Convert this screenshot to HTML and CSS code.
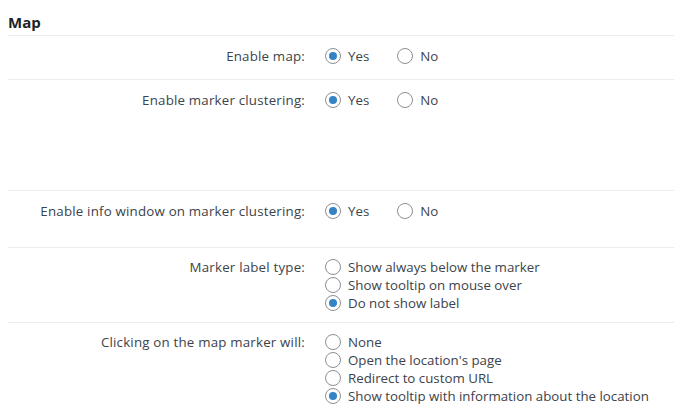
FILE: index.html
```html
<!DOCTYPE html>
<html>
<head>
<meta charset="utf-8">
<link rel="stylesheet" href="styles.css">
</head>
<body>
<div class="page">
  <h2 class="title">Map</h2>
  <div class="row r1">
    <div class="label">Enable map:</div>
    <div class="opts inline">
      <label class="opt"><span class="radio on"></span>Yes</label>
      <label class="opt"><span class="radio"></span>No</label>
    </div>
  </div>
  <div class="row r2">
    <div class="label">Enable marker clustering:</div>
    <div class="opts inline">
      <label class="opt"><span class="radio on"></span>Yes</label>
      <label class="opt"><span class="radio"></span>No</label>
    </div>
  </div>
  <div class="row r3">
    <div class="label">Enable info window on marker clustering:</div>
    <div class="opts inline">
      <label class="opt"><span class="radio on"></span>Yes</label>
      <label class="opt"><span class="radio"></span>No</label>
    </div>
  </div>
  <div class="row r4">
    <div class="label">Marker label type:</div>
    <div class="opts stack">
      <label class="opt"><span class="radio"></span>Show always below the marker</label>
      <label class="opt"><span class="radio"></span>Show tooltip on mouse over</label>
      <label class="opt"><span class="radio on"></span>Do not show label</label>
    </div>
  </div>
  <div class="row r5">
    <div class="label">Clicking on the map marker will:</div>
    <div class="opts stack">
      <label class="opt"><span class="radio"></span>None</label>
      <label class="opt"><span class="radio"></span>Open the location's page</label>
      <label class="opt"><span class="radio"></span>Redirect to custom URL</label>
      <label class="opt"><span class="radio on"></span>Show tooltip with information about the location</label>
    </div>
  </div>
</div>
</body>
</html>
```
FILE: styles.css
```css
html, body { margin: 0; padding: 0; background: #fff; }
body {
  font-family: "Open Sans", "Noto Sans", sans-serif;
  font-size: 13.3px;
  color: #3c434a;
  overflow: hidden;
}
.page { padding-left: 8px; }
.title {
  margin: 0;
  font-size: 15px;
  font-weight: 700;
  color: #1d2327;
  height: 35px;
  line-height: 20px;
  padding-top: 12px;
  box-sizing: border-box;
}
.row {
  display: flex;
  border-top: 1px solid #ececec;
  padding-top: 11px;
  box-sizing: border-box;
}
.r1 { height: 44px; }
.r2 { height: 111px; }
.r3 { height: 57px; }
.r4 { height: 75px; padding-top: 10px; }
.r5 { height: 90px; padding-top: 10px; }
.label {
  width: 297px;
  text-align: right;
  line-height: 18px;
  padding-right: 20px;
  white-space: nowrap;
  letter-spacing: 0.2px;
}
.opts.inline { display: flex; gap: 28px; }
.opts.stack { display: flex; flex-direction: column; }
.opt {
  display: flex;
  align-items: center;
  line-height: 18px;
  height: 18px;
  white-space: nowrap;
}
.radio {
  width: 14px;
  height: 14px;
  border: 1px solid #8c8f94;
  border-radius: 50%;
  margin-right: 7px;
  position: relative;
  box-sizing: content-box;
  flex: none;
}
.radio.on::after {
  content: "";
  position: absolute;
  left: 3px;
  top: 3px;
  width: 8px;
  height: 8px;
  border-radius: 50%;
  background: #3582c4;
}
```
